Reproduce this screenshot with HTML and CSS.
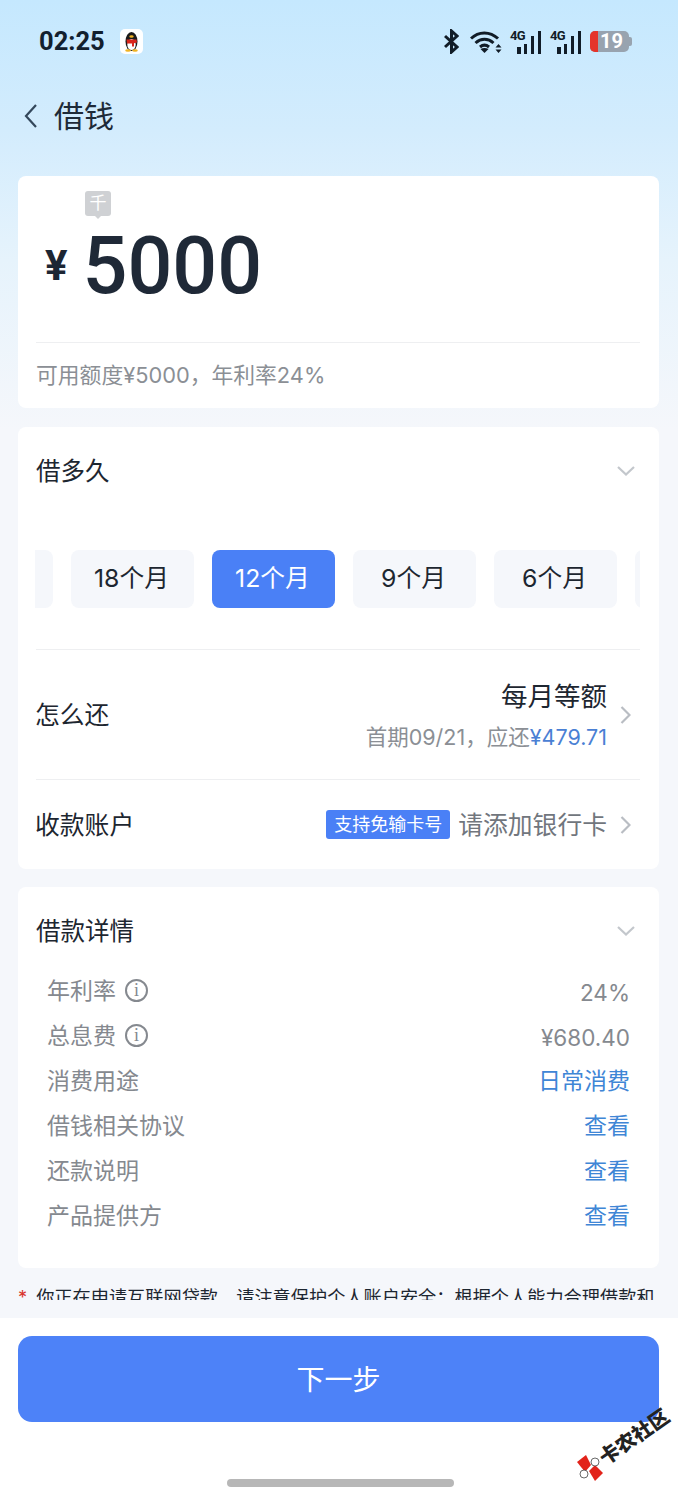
FILE: index.html
```html
<!DOCTYPE html>
<html lang="zh-CN">
<head>
  <meta charset="UTF-8">
  <meta name="viewport" content="width=device-width, initial-scale=1.0">
  <title>借钱</title>
  <link rel="stylesheet" href="styles.css">
</head>
<body>
  <div class="page">
    <main class="main">
      <!-- Status bar -->
      <div class="status-bar">
        <div class="status-left">
          <span class="time">02:25</span>
          <span class="qq-icon">
            <svg width="23" height="25" viewBox="0 0 23 25">
              <ellipse cx="11.5" cy="12.5" rx="6" ry="9.5" fill="#1a1a1a"/>
              <ellipse cx="11.5" cy="15.5" rx="4.2" ry="5.5" fill="#fff"/>
              <path d="M6.5 10.5h10l.5 3-3 .8v3.2h-2v-3H7z" fill="#d9261c"/>
              <ellipse cx="11.5" cy="7.5" rx="2.2" ry="1.2" fill="#f0b323"/>
              <ellipse cx="8" cy="21.5" rx="2.8" ry="1.2" fill="#f0b323"/>
              <ellipse cx="15" cy="21.5" rx="2.8" ry="1.2" fill="#f0b323"/>
            </svg>
          </span>
        </div>
        <div class="status-right">
          <svg width="15" height="25" viewBox="0 0 15 25" fill="none" stroke="#111c27" stroke-width="3">
            <path d="M1 7l12 11-5.500 5V2l5.500 5L1 18"/>
          </svg>
          <svg class="wifi" width="32" height="23" viewBox="0 0 32 23" fill="none" stroke="#111c27" stroke-width="3">
            <path d="M1 8.500C8.500 1 20 1 28 8.500"/>
            <path d="M5.500 13c5.500-5 12.500-5 18 0"/>
            <path d="M10 17c3-2.500 6-2.500 9 0"/>
            <path d="M14.500 23l-4-4c2.500-1.500 5.500-1.500 8 0z" fill="#111c27" stroke="none"/>
            <path d="M28.500 14l-3 3.500h6zM28.500 23l-3-3.500h6z" fill="#111c27" stroke="none"/>
          </svg>
          <span class="signal">
            <span class="signal-tag">4G</span>
            <i class="bar-1"></i><i class="bar-2"></i><i class="bar-3"></i><i class="bar-4"></i>
          </span>
          <span class="signal">
            <span class="signal-tag">4G</span>
            <i class="bar-1"></i><i class="bar-2"></i><i class="bar-3"></i><i class="bar-4"></i>
          </span>
          <span class="battery"><span class="battery-level"></span><span class="battery-text">19</span></span>
        </div>
      </div>

      <!-- Nav -->
      <div class="nav">
        <svg width="14" height="26" viewBox="0 0 14 26" fill="none" stroke="#33475b" stroke-width="2.200">
          <path d="M12 2L2 13l10 11"/>
        </svg>
        <h1>借钱</h1>
      </div>

      <div class="cards">
        <!-- Amount -->
        <section class="card amount-card">
          <div class="unit-tag">千</div>
          <div class="amount-row">
            <span class="currency">¥</span>
            <span class="amount">5000</span>
          </div>
          <p class="quota">可用额度¥5000，年利率24%</p>
        </section>

        <!-- Term and repayment -->
        <section class="card">
          <div class="card-head">
            <h2>借多久</h2>
            <svg class="chevron-down" width="18" height="10" viewBox="0 0 18 10" fill="none" stroke="#c3c7cc" stroke-width="2.200">
              <path d="M1 1l8 7.500L17 1"/>
            </svg>
          </div>
          <div class="term-strip">
            <div class="term-list">
              <span class="term"></span>
              <span class="term">18个月</span>
              <span class="term active">12个月</span>
              <span class="term">9个月</span>
              <span class="term">6个月</span>
              <span class="term"></span>
            </div>
          </div>
          <div class="row row-repay">
            <span class="row-label">怎么还</span>
            <div class="row-value">
              <div class="repay-text">
                <div class="repay-type">每月等额</div>
                <div class="repay-first">首期09/21，应还<span class="repay-money">¥479.71</span></div>
              </div>
              <svg class="chevron-right" width="11" height="18" viewBox="0 0 11 18" fill="none" stroke="#b9bdc3" stroke-width="2.200">
                <path d="M1.500 1l8 8-8 8"/>
              </svg>
            </div>
          </div>
          <div class="row row-account">
            <span class="row-label">收款账户</span>
            <div class="row-value">
              <span class="badge">支持免输卡号</span>
              <span class="add-card">请添加银行卡</span>
              <svg class="chevron-right" width="11" height="18" viewBox="0 0 11 18" fill="none" stroke="#b9bdc3" stroke-width="2.200">
                <path d="M1.500 1l8 8-8 8"/>
              </svg>
            </div>
          </div>
        </section>

        <!-- Details -->
        <section class="card detail-card">
          <div class="card-head">
            <h2>借款详情</h2>
            <svg class="chevron-down" width="18" height="10" viewBox="0 0 18 10" fill="none" stroke="#c3c7cc" stroke-width="2.200">
              <path d="M1 1l8 7.500L17 1"/>
            </svg>
          </div>
          <ul class="detail-list">
            <li>
              <span class="detail-name">年利率<span class="info">i</span></span>
              <span class="detail-value">24%</span>
            </li>
            <li>
              <span class="detail-name">总息费<span class="info">i</span></span>
              <span class="detail-value">¥680.40</span>
            </li>
            <li><span class="detail-name">消费用途</span><span class="detail-link">日常消费</span></li>
            <li><span class="detail-name">借钱相关协议</span><span class="detail-link">查看</span></li>
            <li><span class="detail-name">还款说明</span><span class="detail-link">查看</span></li>
            <li><span class="detail-name">产品提供方</span><span class="detail-link">查看</span></li>
          </ul>
        </section>
      </div>

      <div class="note"><span class="star">*</span><span class="note-text">你正在申请互联网贷款，请注意保护个人账户安全；根据个人能力合理借款和</span></div>
    </main>

    <footer class="footer">
      <button class="next-btn">下一步</button>
      <div class="home-bar"></div>
    </footer>

    <!-- Watermark -->
    <div class="watermark">
      <svg width="28" height="28" viewBox="0 0 28 28">
        <path d="M1 8l9-7 5 10-6 7z" fill="#e2231a"/>
        <path d="M13 17l6-6 8 8-8 8z" fill="#e2231a"/>
        <circle cx="19" cy="8" r="4" fill="#fff" stroke="#444" stroke-width=".8"/>
        <circle cx="8" cy="20" r="4" fill="#fff" stroke="#444" stroke-width=".8"/>
      </svg>
      <span class="watermark-text">卡农社区</span>
    </div>
  </div>
</body>
</html>
```

FILE: styles.css
```css
* {
  box-sizing: border-box;
}
html, body {
  margin: 0;
  padding: 0;
}
body {
  font-family: Inter, "Noto Sans CJK SC", sans-serif;
  color: #1d2630;
  background: #f5f7fb;
}
h1, h2, p, ul {
  margin: 0;
  padding: 0;
  font-weight: 400;
}
.page {
  position: relative;
  width: 678px;
  height: 1500px;
  display: flex;
  flex-direction: column;
  overflow: hidden;
}
.main {
  height: 1318px;
  background: linear-gradient(180deg, #c5e8fe 0, #d3ecfd 130px, #e6f3fc 260px, #f5f7fb 430px);
}

/* Status bar */
.status-bar {
  height: 82px;
  display: flex;
  justify-content: space-between;
  align-items: flex-start;
  padding: 28px 46px 0 39px;
}
.status-left {
  display: flex;
  align-items: center;
  gap: 15px;
}
.time {
  width: 66px;
  font-family: Roboto, sans-serif;
  font-size: 25.500px;
  line-height: 27px;
  font-weight: 700;
  color: #12202e;
}
.qq-icon {
  display: block;
  width: 23px;
  height: 25px;
  background: #fff;
  border-radius: 5px;
}
.qq-icon svg {
  display: block;
}
.status-right {
  display: flex;
  align-items: center;
  gap: 9px;
  height: 27px;
}
.wifi {
  margin-left: 2px;
  margin-right: -1px;
}
.signal {
  position: relative;
  width: 31px;
  height: 24px;
  display: flex;
  align-items: flex-end;
  justify-content: flex-end;
  gap: 3.300px;
}
.signal i {
  display: block;
  width: 3.500px;
  background: #111c27;
}
.signal .bar-1 { height: 7px; }
.signal .bar-2 { height: 10px; }
.signal .bar-3 { height: 18px; }
.signal .bar-4 { height: 23px; }
.signal-tag {
  position: absolute;
  left: 0;
  top: -1px;
  font-family: Roboto, sans-serif;
  font-size: 13px;
  line-height: 13px;
  font-weight: 700;
  letter-spacing: -0.8px;
  color: #111c27;
}
.battery {
  position: relative;
  width: 39px;
  height: 21px;
  margin-right: 3px;
  background: #98a3af;
  border-radius: 5px;
  display: flex;
}
.battery::after {
  content: "";
  position: absolute;
  right: -3px;
  top: 6px;
  width: 3px;
  height: 9px;
  background: #98a3af;
  border-radius: 0 2px 2px 0;
}
.battery-level {
  width: 8px;
  background: #e5342b;
  border-radius: 5px 0 0 5px;
}
.battery-text {
  font-family: Roboto, sans-serif;
  font-size: 20px;
  line-height: 21px;
  font-weight: 700;
  color: #fff;
  margin-left: 2px;
}

/* Nav */
.nav {
  height: 68px;
  display: flex;
  align-items: center;
  padding-left: 24px;
  gap: 16px;
}
.nav h1 {
  font-size: 30px;
  line-height: 40px;
  color: #1e2a38;
}

/* Cards */
.cards {
  padding: 26px 19px 0 18px;
  display: flex;
  flex-direction: column;
  gap: 18px;
}
.card {
  background: #fff;
  border-radius: 8px;
  padding: 0 19px 0 18px;
}
.amount-card {
  position: relative;
  height: 232px;
  margin-bottom: 1px;
}
.unit-tag {
  position: absolute;
  left: 67px;
  top: 15px;
  width: 26px;
  height: 25px;
  background: #cfd1d4;
  border-radius: 3px;
  color: #fff;
  font-size: 17px;
  line-height: 25px;
  text-align: center;
}
.unit-tag::after {
  content: "";
  position: absolute;
  left: 10px;
  bottom: -3px;
  border-left: 3px solid transparent;
  border-right: 3px solid transparent;
  border-top: 3px solid #cfd1d4;
}
.amount-row {
  height: 167px;
  display: flex;
  align-items: center;
  padding: 13px 0 0 9px;
  gap: 15px;
  border-bottom: 1px solid #eeeff1;
}
.currency {
  font-family: Roboto, sans-serif;
  font-size: 42px;
  font-weight: 700;
  line-height: 46px;
  color: #1d2633;
}
.amount {
  font-family: Roboto, sans-serif;
  font-size: 79px;
  line-height: 90px;
  font-weight: 500;
  color: #1f2937;
}
.quota {
  margin-top: 16px;
  font-size: 21.800px;
  line-height: 32px;
  color: #8b8f95;
}
.card-head {
  height: 88px;
  display: flex;
  justify-content: space-between;
  align-items: center;
  padding-right: 5px;
}
.card-head h2 {
  font-size: 24.500px;
  line-height: 34px;
  color: #1d2630;
}

/* Term picker */
.term-strip {
  margin-top: 35px;
  overflow: hidden;
  height: 58px;
  margin-left: -1px;
}
.term-list {
  display: flex;
  gap: 18px;
  margin-left: -105px;
}
.term {
  flex: 0 0 123px;
  height: 58px;
  padding-right: 2px;
  border-radius: 8px;
  background: #f5f7fb;
  font-size: 24.800px;
  line-height: 56px;
  text-align: center;
  color: #1d2630;
}
.term.active {
  background: #4a80f6;
  color: #fff;
}

/* Rows */
.row {
  display: flex;
  justify-content: space-between;
  align-items: center;
  border-top: 1px solid #eeeff1;
}
.row-repay {
  margin-top: 41px;
  height: 130px;
}
.row-account {
  height: 90px;
}
.row-label {
  font-size: 24.800px;
  line-height: 34px;
  color: #1d2630;
  margin-left: -1px;
}
.row-value {
  display: flex;
  align-items: center;
}
.chevron-right {
  margin-left: 13px;
  margin-right: 9px;
  display: block;
}
.repay-text {
  text-align: right;
}
.repay-type {
  font-size: 26.500px;
  line-height: 36px;
  color: #1d2630;
}
.repay-first {
  margin-top: 8px;
  font-size: 21.500px;
  line-height: 30px;
  color: #8b8f95;
}
.repay-money {
  color: #4a80d4;
}
.badge {
  width: 124px;
  height: 29px;
  border-radius: 3px;
  background: #4a80f6;
  color: #fff;
  font-size: 18px;
  line-height: 29px;
  text-align: center;
}
.add-card {
  margin-left: 8px;
  font-size: 24.800px;
  line-height: 34px;
  color: #71767d;
}

/* Details */
.detail-card {
  height: 381px;
}
.detail-list {
  list-style: none;
  padding: 0 10px 0 11px;
  margin-top: -7px;
}
.detail-list li {
  height: 45px;
  display: flex;
  justify-content: space-between;
  align-items: center;
  font-size: 23px;
  line-height: 32px;
}
.detail-name {
  display: flex;
  align-items: center;
  color: #85898f;
}
.info {
  width: 23px;
  height: 23px;
  margin-left: 9px;
  border: 2px solid #85898f;
  border-radius: 50%;
  font-family: "Liberation Serif", serif;
  font-size: 18px;
  line-height: 19px;
  text-align: center;
}
.detail-value {
  padding-top: 4px;
  font-size: 22.500px;
  color: #85898f;
}
.detail-link {
  color: #3f86d6;
}

.note {
  margin: 20px 24px 0 18px;
  height: 12px;
  overflow: hidden;
  display: flex;
  gap: 9px;
  font-size: 18.200px;
  line-height: 18px;
  white-space: nowrap;
  color: #1d2630;
}
.star {
  color: #d9362e;
}

/* Footer */
.footer {
  flex: 1;
  background: #fff;
  padding: 18px 19px 0 18px;
}
.next-btn {
  display: block;
  width: 100%;
  height: 86px;
  padding: 0 0 2px;
  border: none;
  border-radius: 14px;
  background: #4d82f8;
  color: #fff;
  font-family: inherit;
  font-size: 28px;
}
.home-bar {
  width: 227px;
  height: 8px;
  margin: 57px 0 0 209px;
  border-radius: 4px;
  background: #b7b7b7;
}

/* Watermark */
.watermark {
  position: absolute;
  left: 576px;
  top: 1453px;
  display: flex;
  align-items: center;
  transform: rotate(-35deg);
  transform-origin: 14px 15px;
}
.watermark svg {
  flex: none;
  transform: rotate(35deg);
}
.watermark-text {
  font-size: 20px;
  line-height: 30px;
  font-weight: 900;
  color: #222;
  white-space: nowrap;
}
```
